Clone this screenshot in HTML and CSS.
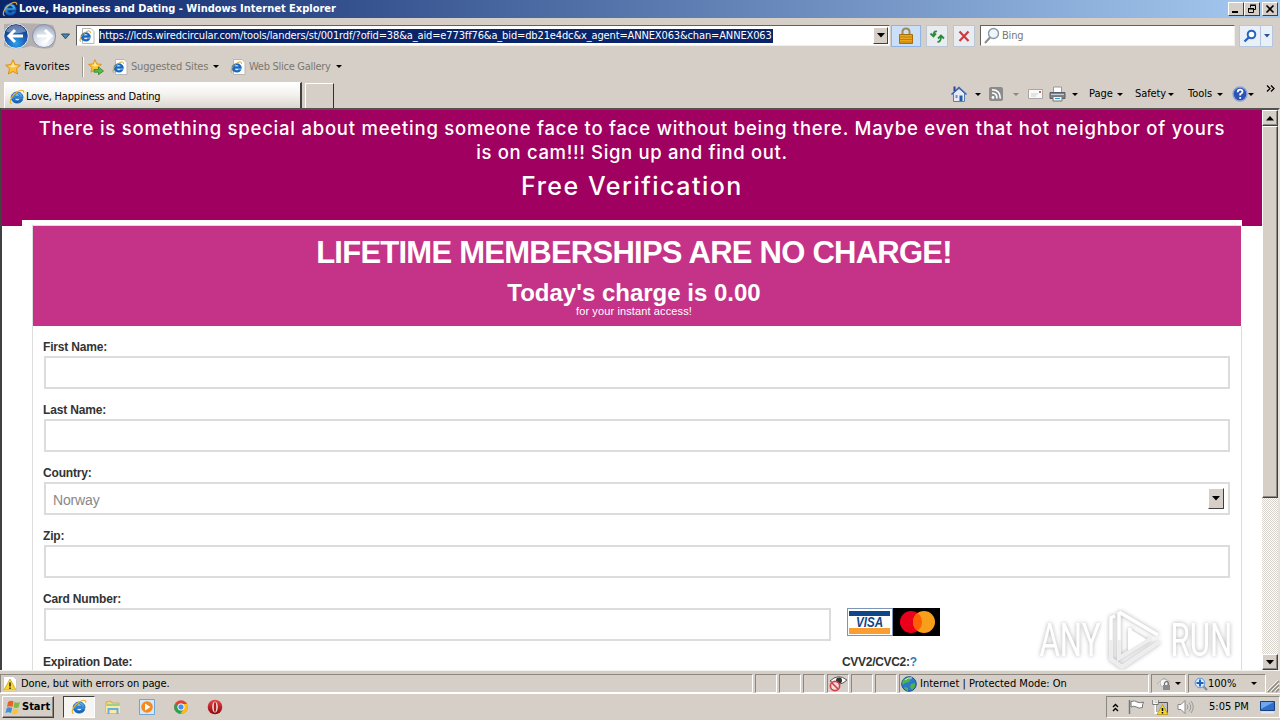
FILE: index.html
```html
<!DOCTYPE html>
<html lang="en">
<head>
<meta charset="utf-8">
<title>Love, Happiness and Dating</title>
<link rel="stylesheet" href="styles.css">
</head>
<body>
<svg class="defs" width="0" height="0" aria-hidden="true">
  <defs>
    <linearGradient id="eb" x1="0" y1="0" x2="0" y2="1"><stop offset="0" stop-color="#62c4f5"/><stop offset="1" stop-color="#0b55b5"/></linearGradient>
    <radialGradient id="ball" cx=".5" cy=".8" r=".8"><stop offset="0" stop-color="#2ba0ee"/><stop offset=".5" stop-color="#1d5fb4"/><stop offset="1" stop-color="#0d2a6c"/></radialGradient>
    <radialGradient id="ball2" cx=".5" cy=".8" r=".8"><stop offset="0" stop-color="#fdfdff"/><stop offset=".6" stop-color="#d3dae6"/><stop offset="1" stop-color="#9aa6bb"/></radialGradient>
    <linearGradient id="opera" x1="0" y1="0" x2="0" y2="1"><stop offset="0" stop-color="#e8474b"/><stop offset="1" stop-color="#8d0508"/></linearGradient>
    <symbol id="ie" viewBox="0 0 16 16">
      <path d="M14 9.300H5.600c.2 3 3.900 3.200 4.800 1.200h3.300C12.300 15.400 3 15.800 2.200 8.700 2.200 1.200 14.500.8 14 9.300zM5.600 6.900h4.900c-.3-2.500-4.500-2.500-4.900 0z" fill="url(#eb)" stroke="#0d5cb5" stroke-width=".8"/>
      <path d="M2.600 14.600C-.8 13.600 2.600 6.800 8.200 3c3-2 6.800-3 6.600.8" fill="none" stroke="#e7b02c" stroke-width="1.100"/>
    </symbol>
    <symbol id="iepage" viewBox="0 0 16 16">
      <path d="M3.500.5h8.500l3 3v12H3.500z" fill="#fff" stroke="#b7b7b7"/>
      <path d="M11.500 9.500H4.700c.2 2.200 2.900 2.400 3.700.9h2.800c-1 3.900-9 4.200-9.300-1.400C1.900 3.300 11.900 2.800 11.500 9.500zM4.700 7.500h3.800c-.2-1.900-3.400-1.900-3.800 0z" fill="#1767c0" stroke="#1767c0" stroke-width=".4"/>
      <path d="M1.800 13.800C-.5 12.500 2.500 7 6.500 4.300c2.500-1.700 5.300-2.100 5 .5" fill="none" stroke="#d9a520" stroke-width="1"/>
    </symbol>
    <symbol id="star" viewBox="0 0 16 16">
      <path d="M8 .8l2.200 4.800 5.200.6-3.900 3.500 1.100 5.300L8 12.400 3.400 15l1.100-5.300L.6 6.200l5.200-.6z" fill="#fdc13a" stroke="#d98a10" stroke-width=".9"/>
      <path d="M8 3l1.400 3.500 3.600.5-5 1.500-4.500-1.600 3.200-.4z" fill="#ffe99a"/>
    </symbol>
  </defs>
</svg>

<div class="desktop">
  <header class="titlebar">
    <svg class="i16"><use href="#ie"/></svg>
    <span class="title">Love, Happiness and Dating - Windows Internet Explorer</span>
    <span class="winbtns">
      <i class="wbtn"><svg width="12" height="10"><path d="M2 8h6" stroke="#000" stroke-width="2"/></svg></i>
      <i class="wbtn"><svg width="12" height="10"><path d="M4.500 3.500v-2h5v4h-2M4 1h6" fill="none" stroke="#000"/><path d="M2.500 4.500h5v4h-5zM2 4.500h6M2 5h6" fill="none" stroke="#000"/></svg></i>
      <i class="wbtn last"><svg width="12" height="10"><path d="M2.500 1.500l7 7m0-7l-7 7" stroke="#000" stroke-width="1.600"/></svg></i>
    </span>
  </header>

  <div class="navbar">
    <svg class="navballs" width="58" height="28">
      <path d="M3 2Q28 0 52 3Q58 14 52 25Q44 29 30 24Q14 29 3 24Z" fill="#b3aeb0"/>
      <circle cx="15" cy="14" r="12.300" fill="url(#ball)" stroke="#e8edf6"/>
      <path d="M5 9.500A11 11 0 0 1 25 9.500Q15 13 5 9.500Z" fill="#fff" opacity=".35"/>
      <path d="M8 14h14M14 8l-6 6 6 6" fill="none" stroke="#fff" stroke-width="3"/>
      <circle cx="43" cy="14" r="11.500" fill="url(#ball2)" stroke="#8b93a4"/>
      <path d="M36 14h14M44 8l6 6-6 6" fill="none" stroke="#fff" stroke-width="3"/>
    </svg>
    <svg class="navdrop" width="10" height="7"><path d="M.5 1h8L4.500 5.800z" fill="#4e86ad" stroke="#1f4f7d"/></svg>
    <div class="address">
      <svg class="i16"><use href="#iepage"/></svg>
      <span class="url">https://lcds.wiredcircular.com/tools/landers/st/001rdf/?ofid=38&amp;a_aid=e773ff76&amp;a_bid=db21e4dc&amp;x_agent=ANNEX063&amp;chan=ANNEX063</span>
      <span class="combo"><svg width="8" height="5"><path d="M0 0h8L4 4.500z"/></svg></span>
    </div>
    <span class="tbtn lock"><svg width="16" height="18"><path d="M4.500 9V5q0-3.500 3.500-3.500T11.500 5v4" fill="none" stroke="#a08a52" stroke-width="2"/><path d="M1.500 7.500h13v9h-13z" fill="#e9a71e" stroke="#a86e0a"/><path d="M2 10h12M2 12.500h12M2 15h12" stroke="#c47f0a"/></svg></span>
    <span class="tbtn"><svg width="16" height="16"><path d="M8 3.500Q4.500 2.500 4.500 8M1.500 5.500l3 3L7 5.500" fill="none" stroke="#2a8a35" stroke-width="1.800"/><path d="M8.500 14Q12 14 12 8.500M9 10.500l3-3 3 3" fill="none" stroke="#2a8a35" stroke-width="1.800"/></svg></span>
    <span class="tbtn"><svg width="14" height="14"><path d="M2.500 2.500l9 9.500m0-9.500l-9 9.500" stroke="#d03a3e" stroke-width="2.200"/></svg></span>
    <div class="search">
      <svg width="16" height="18"><circle cx="9.500" cy="6.500" r="5" fill="#eef6fc" stroke="#8a98a8" stroke-width="1.400"/><path d="M6 10.500L1 16" stroke="#8b8b8b" stroke-width="2"/></svg>
      <span>Bing</span>
    </div>
    <span class="gobtn"><svg width="14" height="14"><circle cx="8.500" cy="5.500" r="3.800" fill="#fff" stroke="#2463c4" stroke-width="2"/><path d="M5.700 8.500L1.500 12.500" stroke="#2463c4" stroke-width="2.400"/></svg></span>
    <span class="godrop"><svg width="6" height="4"><path d="M0 0h6L3 3.500z" fill="#2b5796"/></svg></span>
  </div>

  <div class="favbar">
    <svg class="i16"><use href="#star"/></svg>
    <span class="favlabel">Favorites</span>
    <i class="vsep"></i>
    <svg class="i16 addfav" viewBox="0 0 16 16"><use href="#star" width="14" height="14"/><path d="M6 10.500h4.500V8l5 4-5 3.700v-2.500H6z" fill="#54bd49" stroke="#287a24" stroke-width=".7"/></svg>
    <svg class="i16 sug"><use href="#iepage"/></svg>
    <span class="link l1">Suggested Sites</span><i class="arr"></i>
    <svg class="i16 slice"><use href="#iepage"/></svg>
    <span class="link l2">Web Slice Gallery</span><i class="arr"></i>
  </div>

  <div class="tabrow">
    <div class="tab"><svg class="i16"><use href="#ie"/></svg><span>Love, Happiness and Dating</span></div>
    <div class="newtab"></div>
    <div class="cmds">
      <svg width="18" height="18"><path d="M3.500 8v8.500h11V8L9 3.500z" fill="#e6edf8" stroke="#5b7db5"/><path d="M1.500 9.500L9 2.500l7.500 7" fill="none" stroke="#3d64b0" stroke-width="1.600"/><path d="M4.500 6V1.500" stroke="#3b3b98" stroke-width="2"/><path d="M5.500 10h2v3h-2z" fill="#6f8fc4"/><path d="M9.500 10.500h3V16h-3z" fill="#255c9c"/></svg>
      <i class="arr a1"></i>
      <svg class="rss" width="14" height="14"><rect width="14" height="14" rx="2" fill="#8c8c8c"/><circle cx="4" cy="10.500" r="1.400" fill="#fff"/><path d="M3 6q5 0 5 5.500M3 2.800q8.300 0 8.300 8.700" fill="none" stroke="#fff" stroke-width="1.600"/></svg>
      <i class="arr dim"></i>
      <svg class="mail" width="15" height="12"><path d="M.5 1.500h14v9H.5z" fill="#faf9f8" stroke="#a6a6a6"/><path d="M3 6h7M3 8h5" stroke="#ccc"/><path d="M11 3h2v2h-2z" fill="#c66"/></svg>
      <svg class="print" width="17" height="16"><path d="M4.500 7V1h8v6" fill="#fff" stroke="#999"/><path d="M1 6.500h15v6H1z" fill="#7d8188" stroke="#5a5d64"/><path d="M2 8.500h13" stroke="#c8ced8"/><path d="M4 10.500h9v4.500H4z" fill="#eef4fc" stroke="#777"/><path d="M6 12.500h5" stroke="#39c"/></svg>
      <i class="arr a2"></i>
      <span class="c1">Page</span><i class="arr"></i>
      <span class="c2">Safety</span><i class="arr"></i>
      <span class="c3">Tools</span><i class="arr"></i>
      <svg class="help" width="16" height="16"><circle cx="8" cy="8" r="7" fill="#2d54b4" stroke="#8ca3d6" stroke-width="1.400"/><path d="M5.700 6.200q0-2.500 2.400-2.500t2.400 2.100q0 1.500-2.300 2.400v1.400M8.200 11v1.800" fill="none" stroke="#fff" stroke-width="1.800"/></svg>
      <i class="arr"></i>
      <svg class="chev" width="9" height="7"><path d="M1 .5l3 3-3 3M5 .5l3 3-3 3" fill="none" stroke="#000" stroke-width="1.300"/></svg>
    </div>
  </div>

  <div class="viewport">
    <main class="page">
      <section class="hero">
        <p class="lead">There is something special about meeting someone face to face without being there. Maybe even that hot neighbor of yours</p>
        <p class="lead second">is on cam!!! Sign up and find out.</p>
        <h1>Free Verification</h1>
      </section>
      <section class="card">
        <div class="offer">
          <h2>LIFETIME MEMBERSHIPS ARE NO CHARGE!</h2>
          <h3>Today's charge is 0.00</h3>
          <p>for your instant access!</p>
        </div>
        <div class="form">
          <div class="row"><label>First Name:</label><div class="field"></div></div>
          <div class="row"><label>Last Name:</label><div class="field"></div></div>
          <div class="row"><label>Country:</label><div class="field select"><span>Norway</span><i class="selbtn"><svg width="8" height="5"><path d="M0 0h8L4 4.500z"/></svg></i></div></div>
          <div class="row"><label>Zip:</label><div class="field"></div></div>
          <div class="row"><label>Card Number:</label>
            <div class="cardline"><div class="field cardno"></div>
              <svg width="93" height="28">
                <rect x=".5" y=".5" width="45" height="27" fill="#fff" stroke="#7d96b8"/>
                <rect x="2" y="3" width="41" height="5" fill="#0e4789"/>
                <rect x="2" y="20" width="41" height="6" fill="#fa9e32"/>
                <text x="9" y="18.500" textLength="27" lengthAdjust="spacingAndGlyphs" class="visa">VISA</text>
                <rect x="46" width="47" height="28"/>
                <circle cx="64" cy="14" r="11" fill="#eb001b"/><circle cx="77" cy="14" r="11" fill="#f79e1b"/>
                <path d="M70.500 5.100a11 11 0 0 1 0 17.800a11 11 0 0 1 0-17.800z" fill="#ff5f00"/>
              </svg>
            </div>
          </div>
          <div class="row split"><label class="exp">Expiration Date:</label><label class="cvv">CVV2/CVC2:<b>?</b></label></div>
        </div>
      </section>
      <div class="watermark">
        <span class="wm">ANY</span>
        <svg width="60" height="68">
          <path d="M13 6L52 29M13 6v46L44 33M5 12v41l11 8 37-25M4 12l5-2M24 22v22l16-10" fill="none" stroke="#fff" stroke-width="3.500"/>
          <path d="M5 34v19l11 8 37-25M13 34v18l31-19" fill="none" stroke="#ededed" stroke-width="3.500"/>
          <path d="M22 22v22l18-11z" fill="#fff"/>
        </svg>
        <span class="wm">RUN</span>
      </div>
    </main>
    <div class="scroll">
      <i class="sbtn"><svg width="8" height="5"><path d="M0 4.500h8L4 0z"/></svg></i>
      <i class="thumb"></i>
      <i class="track"></i>
      <i class="sbtn"><svg width="8" height="5"><path d="M0 0h8L4 4.500z"/></svg></i>
    </div>
  </div>

  <div class="status">
    <div class="pane p1">
      <svg width="16" height="16"><path d="M1.500.5h10l3 3v12h-13z" fill="#fff" stroke="#c9c9c9"/><path d="M8 3l6 11H2z" fill="#fbd72e" stroke="#d8b021"/><path d="M8 6.500v4M8 11.500v1.500" stroke="#222" stroke-width="1.500"/></svg>
      <span class="s1">Done, but with errors on page.</span>
    </div>
    <div class="pane sm"></div><div class="pane sm"></div><div class="pane sm"></div>
    <div class="pane sm eye"><svg width="20" height="17"><path d="M1 6q8-8 17-1-8 8-17 1z" fill="#fff" stroke="#555"/><circle cx="10" cy="5.500" r="3" fill="#333"/><circle cx="6" cy="11" r="4.600" fill="#f3dddd" stroke="#d0444a" stroke-width="1.700"/><path d="M3 8l6 6" stroke="#d0444a" stroke-width="1.700"/></svg></div>
    <div class="pane sm"></div><div class="pane sm"></div>
    <div class="pane p2">
      <svg width="16" height="16"><circle cx="8" cy="8" r="7.300" fill="#2c78c8" stroke="#1f4f93"/><path d="M3 3q5-3 7 0l-2 3-4 1-2 2Q0 6 3 3zM10 8l4-1q1 4-3 7l-2-3zM4 11l3 1v3q-3-1-4-3z" fill="#4fb548"/><path d="M4 4q3-3 7-2" stroke="#cfeaff" fill="none"/></svg>
      <span class="s2">Internet | Protected Mode: On</span>
    </div>
    <div class="pane p3">
      <svg width="18" height="16"><path d="M2 8l7-6 6 4" fill="#eee" stroke="#aaa"/><circle cx="9" cy="7" r="4" fill="#f7f7f7" stroke="#b5b5b5"/><path d="M9.500 9V7q2-3 4 0v2" fill="none" stroke="#777" stroke-width="1.300"/><path d="M8 9h7v5H8z" fill="#888b92"/></svg>
      <i class="arr"></i>
    </div>
    <div class="pane p4">
      <svg width="14" height="14"><path d="M8 8l5 5" stroke="#8a8f98" stroke-width="2.400"/><circle cx="6" cy="6" r="4.800" fill="#dceafa" stroke="#5f97d6"/><path d="M6 2.500v7M2.500 6h7" stroke="#1f63bd" stroke-width="2"/></svg>
      <span class="s3">100%</span><i class="arr"></i>
    </div>
    <svg class="grip" width="14" height="14"><path d="M2 13L13 2M6 13l7-7M10 13l3-3" stroke="#8c8880" stroke-width="1.500"/><path d="M1 12L12 1M5 12l8-8M9 12l4-4" stroke="#fff" stroke-width=".8"/></svg>
  </div>

  <footer class="taskbar">
    <div class="start">
      <svg width="16" height="16"><path d="M3 3q3-2 5.500-.5L7.500 8Q5 6.500 2 8z" fill="#e8602c"/><path d="M9.500 3q3 1.500 5.500 0l-1.500 5.500Q11 9.500 8.500 8.300z" fill="#7dbb42"/><path d="M1.700 9Q4.500 7.500 7.200 9L6 14Q3.500 12.500.5 14z" fill="#3f8fd6"/><path d="M8.300 9.500q2.700 1.300 5 0L12 14.700q-2.500 1.300-5 0z" fill="#fcc52f"/></svg>
      <b>Start</b>
    </div>
    <div class="active"><svg class="i16"><use href="#ie"/></svg></div>
    <svg class="q q1" width="16" height="16"><path d="M1 3l5-1 1 2h7v10H1z" fill="#f5d778" stroke="#c9a23c" stroke-width=".7"/><path d="M2 5h12v3H2z" fill="#9fd08a"/><path d="M1 7h14v7H1z" fill="#fbeaa6"/><path d="M3.500 15V10h9v5" fill="none" stroke="#68aee0" stroke-width="2"/></svg>
    <svg class="q q2" width="16" height="16"><path d="M.5.5h15v15H.5z" fill="#d4e8f8" stroke="#6da6d8"/><circle cx="8" cy="8" r="5.800" fill="#f58a1f"/><path d="M6 4.500l5.500 3.500L6 11.500z" fill="#fff"/></svg>
    <svg class="q q3" width="14" height="14" viewBox="1 1 14 14"><circle cx="8" cy="8" r="6.800" fill="#e34133"/><path d="M8 8L2 4.700A6.800 6.800 0 0 0 7.500 14.800L11 9.500z" fill="#2ba24c"/><path d="M8 5h6.100a6.800 6.800 0 0 1-6.600 9.800L11 9.500z" fill="#fbc116"/><circle cx="8" cy="8" r="3.200" fill="#4a8af4" stroke="#fff"/></svg>
    <svg class="q q4" width="16" height="16"><circle cx="8" cy="8" r="7.300" fill="url(#opera)"/><ellipse cx="8" cy="8" rx="2.800" ry="5.600" fill="#e9dede"/><ellipse cx="8" cy="8" rx="1.200" ry="5" fill="#b81a1e"/></svg>
    <div class="tray">
      <svg class="up" width="7" height="9"><path d="M1 4l2.500-2.500L6 4M1 8l2.500-2.500L6 8" fill="none" stroke="#000" stroke-width="1.400"/></svg>
      <svg class="flag" width="17" height="16"><path d="M1.500 1v14" stroke="#777" stroke-width="1.500"/><path d="M3 2.500q4-1.500 6 .5 3 1.500 6.500 0Q14 6 14.500 8.500q-4 1.500-6-.5-3-1.500-5.500 0z" fill="#fff" stroke="#777"/></svg>
      <svg class="net" width="17" height="17"><path d="M4.500 3.500h11v10h-11z" fill="#bfc3c5" stroke="#555"/><path d="M1.500 1v4h4V1M3.500 5v9h4" fill="none" stroke="#fff" stroke-width="2"/><path d="M.7 1v4.500h5.600V1" fill="none" stroke="#555" stroke-width=".8"/><path d="M10.500 5.500l5.500 10H5z" fill="#fbd51f" stroke="#b38b0c" stroke-width=".7"/><path d="M10.500 9v3M10.500 13v1.500" stroke="#000" stroke-width="1.500"/></svg>
      <svg class="vol" width="17" height="16"><path d="M1 5.500h3L8 1.500v13l-4-4H1z" fill="#fff" stroke="#888"/><path d="M10 5.500q2 2.500 0 5M12 3.500q3.500 4.500 0 9M14 2q4.500 6 0 12" fill="none" stroke="#999"/></svg>
      <span class="clock">5:05 PM</span>
      <svg class="desk" width="16" height="13"><path d="M.5.5h14v9H.5z" fill="#2c6fce" stroke="#19407d"/><path d="M1 1h13L1 8z" fill="#6ea8ec"/><path d="M1 11.500h13" stroke="#dfe6ef" stroke-width="2"/></svg>
    </div>
  </footer>
</div>
</body>
</html>
```
FILE: styles.css
```css
* { box-sizing: border-box; }
body { margin: 0; }
p, h1, h2, h3 { margin: 0; font-weight: normal; }
svg { display: block; flex: none; }
.defs { position: absolute; }
.desktop {
  width: 1280px; height: 720px; overflow: hidden;
  display: flex; flex-direction: column;
  background: #d5cfc7; color: #000;
  font: 11px/14px "DejaVu Sans Condensed", "DejaVu Sans", sans-serif;
  white-space: nowrap;
}
.desktop > * { display: flex; flex: none; }
.i16 { width: 16px; height: 16px; }
.arr { width: 0; height: 0; flex: none; border: 3px solid transparent; border-top: 3px solid #000; border-bottom: 0; }

.titlebar { height: 18px; align-items: center; padding: 0 2px; background: linear-gradient(90deg, #0a246a, #a6caf0); color: #fff; font-weight: bold; }
.title { margin-left: 1px; width: 330px; }
.winbtns { margin-left: auto; display: flex; }
.wbtn { width: 16px; height: 14px; background: #d5cfc7; border: 1px solid; border-color: #fff #404040 #404040 #fff; display: flex; align-items: center; justify-content: center; }
.wbtn.last { margin-left: 2px; }

.navbar { height: 35px; align-items: center; padding-left: 1px; }
.navdrop { margin: 1px 0 0 2px; width: 10px; }
.address { margin-left: 5px; width: 814px; height: 21px; background: #fff; border: 1px solid #808080; border-color: #606060 #eee #eee #606060; display: flex; align-items: center; padding-left: 2px; }
.url { margin-left: 4px; height: 14px; line-height: 14px; width: 674px; background: #0a246a; color: #fff; letter-spacing: -.135px; }
.combo { margin-left: auto; width: 15px; height: 17px; margin-right: 1px; background: #d5cfc7; border: 1px solid; border-color: #fff #404040 #404040 #fff; display: flex; align-items: center; justify-content: center; }
.tbtn { margin-left: 5px; width: 22px; height: 22px; background: #e9ecf1; border: 1px solid #bcc6d2; display: flex; align-items: center; justify-content: center; }
.tbtn.lock { margin-left: 1px; width: 30px; background: #cbdff8; border-color: #8fb4e4; }
.search { margin-left: 5px; width: 255px; height: 21px; background: #fff; border: 1px solid; border-color: #606060 #eee #eee #606060; display: flex; align-items: center; padding-left: 3px; color: #777; }
.search span { margin-left: 2px; letter-spacing: -.2px; }
.gobtn, .godrop { height: 22px; background: #eaf0f8; border: 1px solid #b7c6dc; display: flex; align-items: center; justify-content: center; }
.gobtn { margin-left: 4px; width: 22px; }
.godrop { width: 13px; margin-left: -1px; }

.favbar { height: 27px; align-items: center; padding-left: 5px; }
.favlabel { margin-left: 3px; width: 58px; letter-spacing: .12px; }
.vsep { width: 2px; height: 20px; background: #9c978f; border-right: 1px solid #fff; }
.addfav { margin-left: 4px; }
.sug { margin-left: 8px; }
.link { margin-left: 3px; color: #7c7870; }
.l1 { width: 82px; letter-spacing: -.18px; }
.slice { margin-left: 11px; }
.l2 { width: 87px; letter-spacing: -.28px; }

.tabrow { height: 28px; align-items: flex-end; padding-left: 4px; }
.tab { width: 298px; height: 26px; display: flex; align-items: center; padding: 2px 0 0 4px; background: linear-gradient(#fff, #f4f2ef 45%, #dbd6cf); border: 1px solid #fff; border-bottom: 0; border-right: 2px solid #404040; }
.tab span { margin-left: 1px; letter-spacing: -.17px; }
.newtab { margin-left: 3px; width: 29px; height: 25px; border: 1px solid #fff; border-bottom: 0; border-right: 1px solid #303030; }
.cmds { margin-left: auto; height: 28px; display: flex; align-items: center; padding-right: 4px; width: 330px; }
.a1 { margin: 0 8px 0 7px; }
.dim { margin: 0 9px 0 10px; opacity: .35; }
.print { margin-left: 6px; }
.a2 { margin: 0 11px 0 6px; }
.cmds span { flex: none; }
.c1 { width: 28px; } .c2 { width: 33px; margin-left: 12px; letter-spacing: -.1px; } .c3 { width: 29px; margin-left: 14px; }
.help { margin-left: 9px; }
.chev { margin: -12px 0 0 12px; }

.viewport { height: 562px; border-left: 2px solid #404040; border-top: 2px solid #55504e; border-right: 2px solid #e4e0da; }
.page { position: relative; width: 1260px; height: 560px; overflow: hidden; background: #fff; }
.hero { height: 116px; padding-top: 6px; background: #a0005f; color: #fff; text-align: center; font-family: Inter, "Open Sans", sans-serif; font-weight: 500; }
.lead { font-size: 18.500px; line-height: 24px; font-weight: 500; letter-spacing: .77px; }
.lead.second { letter-spacing: .65px; }
.hero h1 { font-size: 25px; line-height: 30px; margin-top: 7px; font-weight: 500; letter-spacing: 1.500px; }
.card { position: relative; width: 1220px; margin: -6px 0 0 20px; padding: 5px 0 0 10px; background: #fff; height: 460px; font-family: "Liberation Sans", Arial, sans-serif; }
.offer { height: 101px; width: 1209px; border: 1px solid #ddd; border-bottom: 0; border-right: 0; background: #c53388; color: #fff; text-align: center; padding-right: 6px; }
.offer h2 { font-weight: bold; font-size: 31px; line-height: 36px; padding-top: 9px; letter-spacing: -.75px; }
.offer h3 { font-weight: bold; font-size: 24px; line-height: 28px; margin-top: 8px; }
.offer p { font-size: 11px; line-height: 12px; margin-top: -2px; letter-spacing: .12px; }
.form { width: 1210px; height: 360px; border: 1px solid #ddd; border-top: 0; padding: 14px 11px 0 10px; }
.row { height: 63px; }
label { display: block; height: 16px; font: bold 12px/14px "Liberation Sans", Arial, sans-serif; letter-spacing: -.17px; color: #333; }
.field { margin-left: 1px; height: 33px; border: 2px solid #dcdcdc; background: #fff; }
.select { display: flex; align-items: center; padding: 0 4px 0 7px; font-size: 14px; color: #888; letter-spacing: -.15px; }
.select span { padding-top: 2px; }
.selbtn { margin-left: auto; width: 16px; height: 21px; background: #d5cfc7; border: 1px solid; border-color: #fff #404040 #404040 #fff; display: flex; align-items: center; justify-content: center; }
.cardline { display: flex; }
.cardno { width: 787px; margin-right: 16px; }
.split { display: flex; }
.exp { width: 799px; }
.cvv { letter-spacing: -.3px; }
.cvv b { color: #337ab7; }
.visa { font: italic bold 14px "Liberation Sans", Arial, sans-serif; fill: #0e4789; }
.watermark { position: absolute; left: 1004px; top: 496px; width: 256px; display: flex; justify-content: center; align-items: center; filter: drop-shadow(0 0 2px rgba(0,0,0,.32)); transform: translateX(1px); }
.watermark svg { margin: 0 -10px 0 -9px; }
.wm { font: 46px/60px Roboto, "Liberation Sans", sans-serif; color: #fff; width: 90px; text-align: center; transform: scaleX(.68); }

.scroll { width: 16px; height: 560px; display: flex; flex-direction: column; }
.sbtn, .thumb { background: #d5cfc7; border: 1px solid; border-color: #fff #404040 #404040 #fff; box-shadow: inset -1px -1px #8f8b84; flex: none; }
.sbtn { height: 16px; display: flex; align-items: center; justify-content: center; }
.thumb { height: 372px; }
.track { flex: 1; background: repeating-conic-gradient(#fff 0 25%, #d8d3cc 0 50%) 0 0 / 2px 2px; }

.status { height: 24px; padding-top: 3px; align-items: flex-start; gap: 2px; border-bottom: 1px solid #fff; border-top: 1px solid #f4f2ee; }
.pane { height: 19px; border: 1px solid; border-color: #8b877f #fff #fff #8b877f; display: flex; align-items: center; flex: none; }
.p1 { width: 753px; padding-left: 1px; }
.s1 { margin-left: 3px; letter-spacing: -.1px; }
.sm { width: 22px; }
.eye { padding-left: 1px; }
.p2 { width: 250px; padding-left: 1px; }
.s2 { margin-left: 3px; }
.p3 { width: 35px; padding-left: 3px; }
.p3 .arr { margin-left: 2px; }
.p4 { width: 78px; padding-left: 5px; }
.s3 { margin-left: 0; width: 43px; }
.grip { margin: 5px 0 0 -2px; }

.taskbar { height: 26px; align-items: center; padding-left: 2px; }
.start { width: 52px; height: 22px; display: flex; align-items: center; padding-left: 2px; gap: 1px; border: 1px solid; border-color: #fff #404040 #404040 #fff; box-shadow: inset -1px -1px #8f8b84; }
.active { margin-left: 9px; width: 32px; height: 22px; background: #f7f5f2; border: 1px solid; border-color: #404040 #fff #fff #404040; display: flex; align-items: center; justify-content: center; }
.q1 { margin-left: 10px; } .q2 { margin-left: 18px; } .q3 { margin-left: 19px; } .q4 { margin-left: 19px; }
.tray { margin-left: auto; width: 174px; height: 22px; border: 1px solid; border-color: #8b877f #fff #fff #8b877f; display: flex; align-items: center; padding-left: 5px; }
.flag { margin-left: 9px; } .net { margin-left: 7px; } .vol { margin-left: 8px; }
.clock { margin-left: 15px; width: 51px; }
```
